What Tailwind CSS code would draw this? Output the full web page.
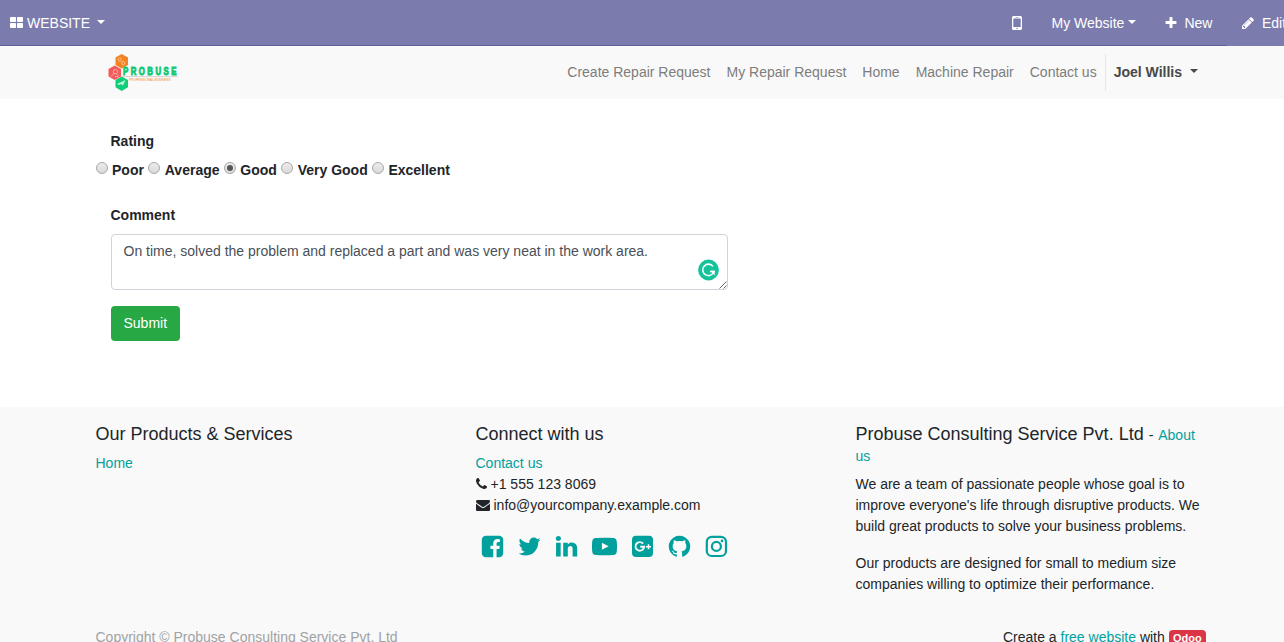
<!DOCTYPE html>
<html lang="en">
<head>
<meta charset="utf-8">
<title>Feedback | My Website</title>
<script src="https://cdn.jsdelivr.net/npm/@tailwindcss/browser@4"></script>
</head>
<body class="h-[642px] w-[1284px] overflow-hidden bg-white font-['Liberation_Sans',Arial,sans-serif] text-sm leading-[21px] text-[#212529]">

<nav class="h-[46px] bg-[#7c7bad] text-white">
  <div class="flex h-[45px] items-center whitespace-nowrap pl-[10px] pt-px">
    <svg class="mb-px h-[11px] w-[13px] shrink-0" viewBox="0 0 13 11" fill="currentColor"><rect width="6" height="5" rx=".8"/><rect x="7" width="6" height="5" rx=".8"/><rect y="6" width="6" height="5" rx=".8"/><rect x="7" y="6" width="6" height="5" rx=".8"/></svg>
    <span class="ml-1">WEBSITE</span>
    <span class="mb-[2px] ml-[7px] border-x-4 border-t-4 border-x-transparent border-t-white"></span>
    <div class="ml-auto flex w-[272px] shrink-0 items-center">
      <svg class="h-[14px] w-[10px] shrink-0" viewBox="0 0 10 14"><path fill="#fff" fill-rule="evenodd" d="M1.500 0h7A1.500 1.500 0 0 1 10 1.500v11A1.500 1.500 0 0 1 8.500 14h-7A1.500 1.500 0 0 1 0 12.500v-11A1.500 1.500 0 0 1 1.500 0zM1.300 2.500v8.500h7.400V2.500zM3.500 1v.5h3V1zM5 11.800a.7.7 0 1 0 0 1.400.7.7 0 0 0 0-1.400z"/></svg>
      <span class="ml-[29.500px]">My Website</span>
      <span class="mb-[2px] ml-[3.500px] border-x-4 border-t-4 border-x-transparent border-t-white"></span>
      <svg class="ml-[28px] size-[14px] shrink-0" viewBox="0 0 1792 1792" fill="currentColor"><path d="M1600 736v192q0 40-28 68t-68 28h-416v416q0 40-28 68t-68 28h-192q-40 0-68-28t-28-68v-416h-416q-40 0-68-28t-28-68v-192q0-40 28-68t68-28h416v-416q0-40 28-68t68-28h192q40 0 68 28t28 68v416h416q40 0 68 28t28 68z"/></svg>
      <span class="ml-[6.500px]">New</span>
      <svg class="mb-px ml-[28.500px] size-[14px] shrink-0" viewBox="0 0 1792 1792" fill="currentColor"><path d="M491 1536l91-91-235-235-91 91v107h128v128h107zm523-928q0-22-22-22-10 0-17 7l-542 542q-7 7-7 17 0 22 22 22 10 0 17-7l542-542q7-7 7-17zm-54-192l416 416-832 832h-416v-416zm683 96q0 53-37 90l-166 166-416-416 166-165q36-38 90-38 53 0 91 38l235 234q37 39 37 91z"/></svg>
      <span class="ml-[7px]">Edit</span>
    </div>
  </div>
  <div class="h-px w-[1227px] bg-[#605fa0]"></div>
</nav>

<header class="flex h-[53px] items-center bg-[#f9f9f9] pl-[107px]">
  <svg class="mb-px h-[38px] w-[72px] shrink-0" viewBox="0 0 72 38">
    <path fill="#f58220" d="M14.700 1l6.300 3.600v7.300l-6.300 3.600-6.200-3.600V4.600z"/>
    <path fill="#f15b5b" d="M7.700 12.500l6.300 3.600v7.300L7.700 27l-6.200-3.600v-7.300z"/>
    <path fill="#0fce78" d="M14.700 23.500l6.300 3.600v7.200l-6.300 3.600-6.200-3.600v-7.200z"/>
    <g fill="none" stroke="#fff" stroke-opacity=".5" stroke-width=".9"><circle cx="12.800" cy="6.500" r="1.600"/><circle cx="16.300" cy="10" r="1.600"/><circle cx="8.500" cy="18.800" r="2.200"/><path d="M4 23.500l3-3M8 23.500h3v-2"/></g>
    <path fill="#fff" fill-opacity=".75" d="M10 31l8.500-4-2.500 5.500-2-1.500-2 1z"/>
    <path d="M15 23.600h55.500" stroke="#c9b9ad" stroke-width=".6"/>
    <text transform="translate(16 21.600) scale(.78 1)" textLength="68.500" lengthAdjust="spacing" font-family="Liberation Sans" font-weight="700" font-size="10" fill="#10c873" stroke="#10c873" stroke-width=".9">PROBUSE</text>
    <text x="22" y="28.300" textLength="41.500" lengthAdjust="spacingAndGlyphs" font-family="Liberation Sans" font-size="4" fill="#f58a38">PROFESSIONAL BUSINESS</text>
  </svg>
  <div class="ml-[388.300px] flex items-center whitespace-nowrap text-[#7d7d7d]">
    <span>Create Repair Request</span>
    <span class="ml-4">My Repair Request</span>
    <span class="ml-4">Home</span>
    <span class="ml-4">Machine Repair</span>
    <span class="ml-4">Contact us</span>
    <div class="ml-2 flex h-[37px] items-center border-l border-[#e6e6e6] pl-2 font-bold text-[#484848]">Joel Willis<span class="mb-[3px] ml-2 border-x-4 border-t-4 border-x-transparent border-t-[#484848]"></span></div>
  </div>
</header>

<main class="h-[308px] pl-[96px] pt-[32px]">
  <div class="pl-[14.500px] font-bold">Rating</div>
  <div class="mt-2 flex h-[21px] items-center whitespace-nowrap font-bold">
    <span class="mb-[5px] mr-1 size-3 rounded-full border border-[#a8a8a8] bg-linear-to-b from-[#ececec] to-[#d9d9d9]"></span><span>Poor</span>
    <span class="mb-[5px] ml-[4.100px] mr-[4.800px] size-3 rounded-full border border-[#a8a8a8] bg-linear-to-b from-[#ececec] to-[#d9d9d9]"></span>Average
    <span class="mb-[5px] ml-[4px] mr-[4.800px] flex size-3 items-center justify-center rounded-full border border-[#a8a8a8] bg-linear-to-b from-[#ececec] to-[#d9d9d9]"><span class="size-[6px] rounded-full bg-[#555]"></span></span>Good
    <span class="mb-[5px] ml-[4px] mr-[4.800px] size-3 rounded-full border border-[#a8a8a8] bg-linear-to-b from-[#ececec] to-[#d9d9d9]"></span>Very Good
    <span class="mb-[5px] ml-[4px] mr-[4.700px] size-3 rounded-full border border-[#a8a8a8] bg-linear-to-b from-[#ececec] to-[#d9d9d9]"></span>Excellent
  </div>
  <div class="mt-[24px] pl-[14.500px] font-bold">Comment</div>
  <div class="relative ml-[15px] mt-[8px] h-[56px] w-[617px] rounded-[4px] border border-[#ced4da] bg-white pl-[11.500px] pt-[6px] text-[#495057]">On time, solved the problem and replaced a part and was very neat in the work area.
    <svg class="absolute right-[8px] top-[24px] h-[22px] w-[21px]" viewBox="0 0 22 22"><circle cx="11" cy="11" r="10.900" fill="#15c39a"/><path d="M15.700 7.200A6 6 0 1 0 16.700 12.500H12.500" fill="none" stroke="#fff" stroke-width="1.600"/><path fill="#fff" d="M13 11.800h4.500v4.700l-1.600-1.300z"/></svg>
    <svg class="absolute bottom-0 right-0 size-[8px]" viewBox="0 0 8 8"><path d="M.5 7.500l7-7M4.500 7.500l3-3" stroke="#666" fill="none"/></svg>
  </div>
  <button class="ml-[15px] mt-4 flex h-[35px] w-[69px] items-center rounded-[4px] bg-[#28a745] pl-[12.500px] text-white">Submit</button>
</main>

<footer class="h-[235px] bg-[#f9f9f9] pl-[95.500px] pt-4">
  <div class="flex h-[204px]">
    <section class="w-[380px]">
      <h4 class="text-lg leading-[22px]">Our Products &amp; Services</h4>
      <div class="mt-[8px] text-[#00a09d]">Home</div>
    </section>
    <section class="w-[380px]">
      <h4 class="text-lg leading-[22px]">Connect with us</h4>
      <div class="mt-[8px] text-[#00a09d]">Contact us</div>
      <div class="flex items-center"><svg class="mb-[2px] mr-[4px] h-[14px] w-[11px]" viewBox="192 0 1408 1792" fill="currentColor"><path d="M1600 1240q0 27-10 70.500t-21 68.500q-21 50-122 106-94 51-186 51-27 0-53-3.500t-57.500-12.500-47-14.500-55.500-20.500-49-18q-98-35-175-83-127-79-264-216t-216-264q-48-77-83-175-3-9-18-49t-20.500-55.500-14.500-47-12.500-57.500-3.500-53q0-92 51-186 56-101 106-122 25-11 68.500-21t70.500-10q14 0 21 3 18 6 53 76 11 19 30 54t35 63.500 31 53.500q3 4 17.500 25t21.500 35.500 7 28.500q0 20-28.500 50t-62 55-62 53-28.500 46q0 9 5 22.500t8.500 20.500 14 24 11.500 19q76 137 174 235t235 174q2 1 19 11.500t24 14 20.500 8.500 22.500 5q18 0 46-28.500t53-62 55-62 50-28.500q14 0 28.500 7t35.500 21.500 25 17.500q25 15 53.500 31t63.500 35 54 30q70 35 76 53 3 7 3 21z"/></svg>+1 555 123 8069</div>
      <div class="flex items-center"><svg class="mb-[2px] mr-[4px] size-[14px]" viewBox="0 0 1792 1792" fill="currentColor"><path d="M1792 710v794q0 66-47 113t-113 47h-1472q-66 0-113-47t-47-113v-794q44 49 101 87 362 246 497 345 57 42 92.500 65.500t94.500 48 110 24.500h2q51 0 110-24.500t94.500-48 92.500-65.500q170-123 498-345 57-39 100-87zm0-294q0 79-49 151t-122 123q-376 261-468 325-10 7-42.500 31t-54 38.500-52 32.500-57.500 27-50 9h-2q-23 0-50-9t-57.500-27-52-32.500-54-38.500-42.500-31q-91-64-262-182.500t-205-142.500q-62-42-117-115.500t-55-136.500q0-78 41.500-130t118.500-52h1472q65 0 112.500 47t47.500 113z"/></svg>info@yourcompany.example.com</div>
      <div class="ml-[4px] mt-[18px] flex gap-[12.500px] text-[#00a09d]">
        <svg class="size-[25px]" viewBox="0 0 1792 1792" fill="currentColor"><path d="M1376 128q119 0 203.500 84.500t84.500 203.500v960q0 119-84.500 203.500t-203.500 84.500h-188v-595h199l30-232h-229v-148q0-56 23.500-84t91.500-28l122-1v-207q-63-9-178-9-136 0-217.500 80t-81.500 226v171h-200v232h200v595h-532q-119 0-203.500-84.500t-84.500-203.500v-960q0-119 84.500-203.500t203.500-84.500h960z"/></svg>
        <svg class="-ml-[.5px] size-[25px]" viewBox="0 0 1792 1792" fill="currentColor"><path d="M1684 408q-67 98-162 167 1 14 1 42 0 130-38 259.500t-115.500 248.500-184.500 210.500-258 146-323 54.500q-271 0-496-145 35 4 78 4 225 0 401-138-105-2-188-64.500t-114-159.500q33 5 61 5 43 0 85-11-112-23-185.500-111.500t-73.500-205.500v-4q68 38 146 41-66-44-105-115t-39-154q0-88 44-163 121 149 294.500 238.500t371.500 99.500q-8-38-8-74 0-134 94.500-228.500t228.500-94.500q140 0 236 102 109-21 205-78-37 115-142 178 93-10 186-50z"/></svg>
        <svg class="size-[25px]" viewBox="0 0 1792 1792" fill="currentColor"><path d="M477 625v991h-330v-991h330zm21-306q1 73-50.500 122t-135.500 49h-2q-82 0-132-49t-50-122q0-74 51.500-122.500t134.500-48.500 133 48.500 51 122.500zm1166 729v568h-329v-530q0-105-40.500-164.500t-126.500-59.500q-63 0-105.500 34.500t-63.500 85.500q-11 30-11 81v553h-329q2-399 2-647t-1-296l-1-48h329v144h-2q20-32 41-56t56.500-52 87-43.500 114.500-15.500q171 0 275 113.500t104 332.500z"/></svg>
        <svg class="ml-[.5px] size-[25px]" viewBox="0 0 1792 1792" fill="currentColor"><path d="M711 1128l484-250-484-253v503zm185-862q168 0 324.500 4.500t229.500 9.500l73 4q1 0 17 1.500t23 3 23.500 4.500 28.500 8 28 13 31 19.500 29 26.500q6 6 15.500 18.500t29 58.500 26.500 101q8 64 12.500 136.500t5.500 113.500v176q1 145-18 290-7 55-25 99.500t-32 61.500l-14 17q-14 15-29 26.500t-31 19-28 12.500-28.500 8-24 4.500-23 3-16.500 1.500q-251 19-627 19-207-2-359.500-6.500t-200.500-7.500l-49-4-36-4q-36-5-54.500-10t-51-21-56.500-41q-6-6-15.500-18.500t-29-58.500-26.500-101q-8-64-12.500-136.500t-5.500-113.500v-176q-1-145 18-290 7-55 25-99.500t32-61.500l14-17q14-15 29-26.500t31-19.500 28-13 28.500-8 23.500-4.500 23-3 17-1.500q251-18 627-18z"/></svg>
        <svg class="ml-[.5px] size-[25px]" viewBox="0 0 25 25"><rect x="2" y="1.800" width="21" height="21.200" rx="4" fill="currentColor"/><path d="M13.100 9.600A4.300 4.300 0 1 0 14.100 12.800H10.300" fill="none" stroke="#f9f9f9" stroke-width="1.900"/><path d="M18.500 10.200v5M16 12.700h5" stroke="#f9f9f9" stroke-width="1.500"/></svg>
        <svg class="-ml-[.5px] size-[25px]" viewBox="0 0 1792 1792" fill="currentColor"><path d="M896 128q209 0 385.500 103t279.500 279.500 103 385.500q0 251-146.500 451.500t-378.500 277.500q-27 5-40-7t-13-30q0-3 .5-76.500t.5-134.500q0-97-52-142 57-6 102.500-18t94-39 81-66.500 53-105 20.500-150.500q0-119-79-206 37-91-8-204-28-9-81 11t-92 44l-38 24q-93-26-192-26t-192 26q-16-11-42.500-27t-83.500-38.500-85-13.500q-45 113-8 204-79 87-79 206 0 85 20.500 150t52.500 105 80.500 67 94 39 102.500 18q-39 36-49 103-21 10-45 15t-57 5-65.500-21.500-55.500-62.500q-19-32-48.500-52t-49.500-24l-20-3q-21 0-29 4.500t-5 11.500 9 14 13 12l7 5q22 10 43.500 38t31.500 51l10 23q13 38 44 61.500t67 30 69.500 7 55.500-3.500l23-4q0 38 .5 88.500t.5 54.500q0 18-13 30t-40 7q-232-77-378.500-277.500t-146.500-451.500q0-209 103-385.500t279.500-279.500 385.500-103z"/></svg>
        <svg class="-ml-[1px] size-[25px]" viewBox="0 0 25 25" fill="none" stroke="currentColor" stroke-width="2.200"><rect x="2.800" y="2.800" width="19.200" height="19.200" rx="5"/><circle cx="12.400" cy="12.400" r="4.500"/><circle cx="18" cy="6.900" r="1.300" fill="currentColor" stroke="none"/></svg>
      </div>
    </section>
    <section class="w-[350px]">
      <div class="h-[43px]"><span class="text-lg leading-[22px]">Probuse Consulting Service Pvt. Ltd </span><span class="mr-px">- </span><span class="text-[#00a09d]">About us</span></div>
      <p class="mt-[8px]">We are a team of passionate people whose goal is to improve everyone's life through disruptive products. We build great products to solve your business problems.</p>
      <p class="mt-4">Our products are designed for small to medium size companies willing to optimize their performance.</p>
    </section>
  </div>
  <div class="flex w-[1110.500px] justify-between whitespace-nowrap">
    <span class="text-[#a0a2a4]">Copyright © Probuse Consulting Service Pvt. Ltd</span>
    <div>Create a <span class="text-[#00a09d]">free website</span> with <span class="inline-block h-[16px] rounded-[4px] bg-[#dc3545] px-[4.300px] text-center text-[11px] font-bold leading-[17px] text-white">Odoo</span></div>
  </div>
</footer>
</body>
</html>
